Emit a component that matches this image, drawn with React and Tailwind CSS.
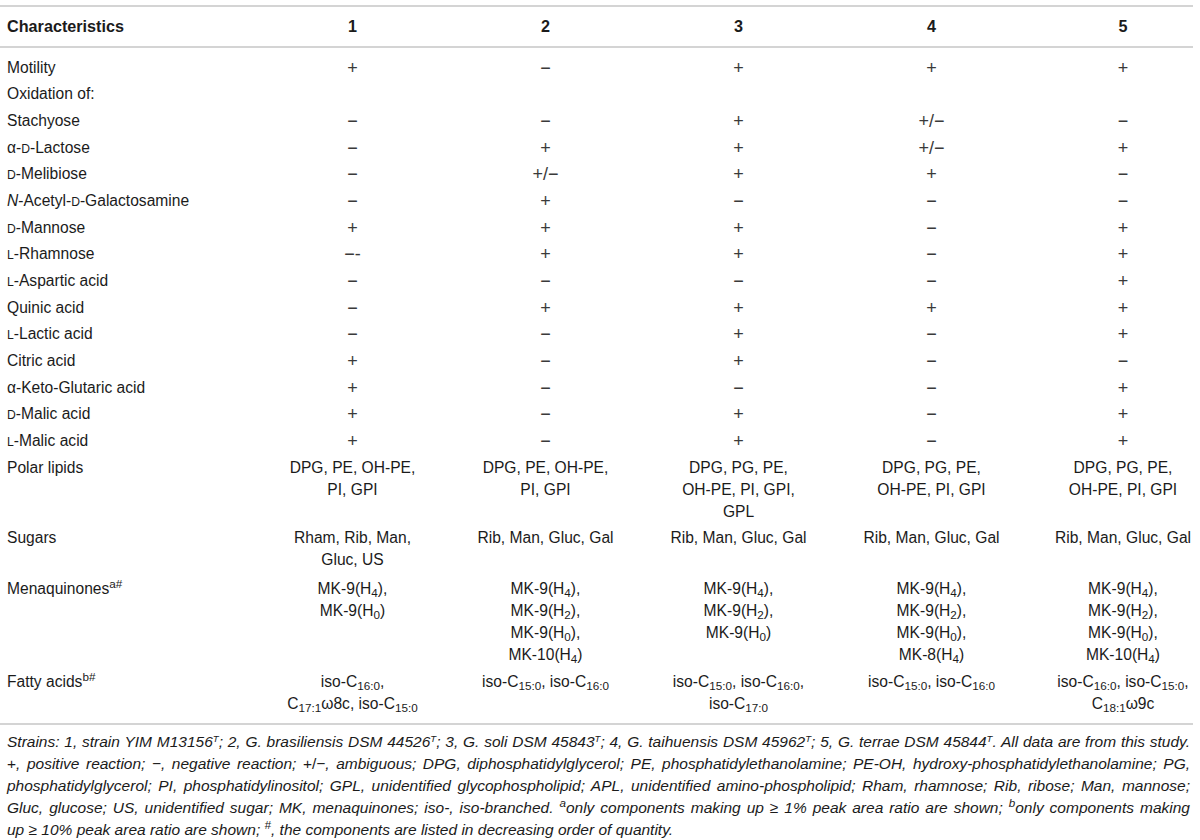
import React from "react";

const sc = (c) => <span className="text-[0.78em] leading-[0]">{c}</span>;
const MK = (n, h) => (
  <>
    MK-{n}(H<sub>{h}</sub>)
  </>
);
const C = (s) => (
  <>
    C<sub>{s}</sub>
  </>
);
const iso = (s) => <>iso-{C(s)}</>;

const M = "\u2212";
const P = "+";
const PM = "+/\u2212";

const rows = [
  ["Motility", [P, M, P, P, P]],
  ["Oxidation of:", ["", "", "", "", ""]],
  ["Stachyose", [M, M, P, PM, M]],
  [<>α-{sc("D")}-Lactose</>, [M, P, P, PM, P]],
  [<>{sc("D")}-Melibiose</>, [M, PM, P, P, M]],
  [
    <>
      <i>N</i>-Acetyl-{sc("D")}-Galactosamine
    </>,
    [M, P, M, M, M],
  ],
  [<>{sc("D")}-Mannose</>, [P, P, P, M, P]],
  [<>{sc("L")}-Rhamnose</>, [M + "-", P, P, M, P]],
  [<>{sc("L")}-Aspartic acid</>, [M, M, M, M, P]],
  ["Quinic acid", [M, P, P, P, P]],
  [<>{sc("L")}-Lactic acid</>, [M, M, P, M, P]],
  ["Citric acid", [P, M, P, M, M]],
  ["α-Keto-Glutaric acid", [P, M, M, M, P]],
  [<>{sc("D")}-Malic acid</>, [P, M, P, M, P]],
  [<>{sc("L")}-Malic acid</>, [P, M, P, M, P]],
  [
    "Polar lipids",
    [
      <>DPG, PE, OH-PE,<br />PI, GPI</>,
      <>DPG, PE, OH-PE,<br />PI, GPI</>,
      <>DPG, PG, PE,<br />OH-PE, PI, GPI,<br />GPL</>,
      <>DPG, PG, PE,<br />OH-PE, PI, GPI</>,
      <>DPG, PG, PE,<br />OH-PE, PI, GPI</>,
    ],
  ],
  [
    "Sugars",
    [
      <>Rham, Rib, Man,<br />Gluc, US</>,
      "Rib, Man, Gluc, Gal",
      "Rib, Man, Gluc, Gal",
      "Rib, Man, Gluc, Gal",
      "Rib, Man, Gluc, Gal",
    ],
  ],
  [
    <>
      Menaquinones<sup>a#</sup>
    </>,
    [
      <>{MK(9, 4)},<br />{MK(9, 0)}</>,
      <>{MK(9, 4)},<br />{MK(9, 2)},<br />{MK(9, 0)},<br />{MK(10, 4)}</>,
      <>{MK(9, 4)},<br />{MK(9, 2)},<br />{MK(9, 0)}</>,
      <>{MK(9, 4)},<br />{MK(9, 2)},<br />{MK(9, 0)},<br />{MK(8, 4)}</>,
      <>{MK(9, 4)},<br />{MK(9, 2)},<br />{MK(9, 0)},<br />{MK(10, 4)}</>,
    ],
  ],
  [
    <>
      Fatty acids<sup>b#</sup>
    </>,
    [
      <>{iso("16:0")},<br />{C("17:1")}ω8c, {iso("15:0")}</>,
      <>{iso("15:0")}, {iso("16:0")}</>,
      <>{iso("15:0")}, {iso("16:0")},<br />{iso("17:0")}</>,
      <>{iso("15:0")}, {iso("16:0")}</>,
      <>{iso("16:0")}, {iso("15:0")},<br />{C("18:1")}ω9c</>,
    ],
  ],
];

const SYMS = [P, M, PM, M + "-"];

const T = <sup className="text-[0.62em]">T</sup>;

function Line({ children, last }) {
  return (
    <div className={last ? "text-left" : "text-justify [text-align-last:justify]"}>
      {children}
    </div>
  );
}

function Cell({ c, last }) {
  const sym = typeof c === "string" && SYMS.includes(c);
  return (
    <div
      className={
        "text-center whitespace-nowrap" +
        (sym || c === "" ? " h-[22px]" : "") +
        (last ? " pl-[25px]" : "")
      }
    >
      {sym ? (
        <span className="inline-block h-[22px] text-[18px] leading-[22px] text-[#3a3a3a] align-top">
          {c}
        </span>
      ) : (
        c
      )}
    </div>
  );
}

export default function App() {
  return (
    <div className="w-[1200px] h-[840px] bg-white overflow-hidden font-['Liberation_Sans',Arial,sans-serif] text-[#1b1b1b]">
      <div className="w-[1193px] pt-[5px]">
        <div className="h-[2px] bg-[#d4d4d4]" />
        <div className="grid grid-cols-[256px_193px_193px_193px_193px_165px] h-[39px] items-center font-bold text-[16.2px]">
          <div className="pl-[7px]">Characteristics</div>
          <div className="text-center">1</div>
          <div className="text-center">2</div>
          <div className="text-center">3</div>
          <div className="text-center">4</div>
          <div className="text-center pl-[25px]">5</div>
        </div>
        <div className="h-[2px] bg-[#d4d4d4]" />
        <div className="pt-[6.5px] pb-[5.7px] text-[15.6px] leading-[22px]">
          {rows.map(([label, cells], i) => (
            <div
              key={i}
              className={
                "grid grid-cols-[256px_193px_193px_193px_193px_165px] items-start " +
                (i === 16 ? "pt-[2.33px] pb-[4.5px]" : "py-[2.33px]")
              }
            >
              <div className="pl-[7px] min-h-[22px] whitespace-nowrap">{label}</div>
              {cells.map((c, j) => (
                <Cell key={j} c={c} last={j === 4} />
              ))}
            </div>
          ))}
        </div>
        <div className="h-[2px] bg-[#d4d4d4]" />
        <div className="pt-[6px] pl-[7px] pr-[3px] italic text-[15.5px] leading-[22px]">
          <Line>
            Strains: 1, strain YIM M13156{T}; 2, G. brasiliensis DSM 44526{T}; 3, G. soli DSM 45843{T}; 4, G. taihuensis DSM 45962{T}; 5, G. terrae DSM 45844{T}. All data are from this study.
          </Line>
          <Line>
            <span className="not-italic">+</span>, positive reaction; <span className="not-italic">{M}</span>, negative reaction; <span className="not-italic">+/{M}</span>, ambiguous; DPG, diphosphatidylglycerol; PE, phosphatidylethanolamine; PE-OH, hydroxy-phosphatidylethanolamine; PG,
          </Line>
          <Line>
            phosphatidylglycerol; PI, phosphatidylinositol; GPL, unidentified glycophospholipid; APL, unidentified amino-phospholipid; Rham, rhamnose; Rib, ribose; Man, mannose;
          </Line>
          <Line>
            Gluc, glucose; US, unidentified sugar; MK, menaquinones; iso-, iso-branched. <sup>a</sup>only components making up ≥ 1% peak area ratio are shown; <sup>b</sup>only components making
          </Line>
          <Line last>
            up ≥ 10% peak area ratio are shown; <sup>#</sup>, the components are listed in decreasing order of quantity.
          </Line>
        </div>
      </div>
    </div>
  );
}
